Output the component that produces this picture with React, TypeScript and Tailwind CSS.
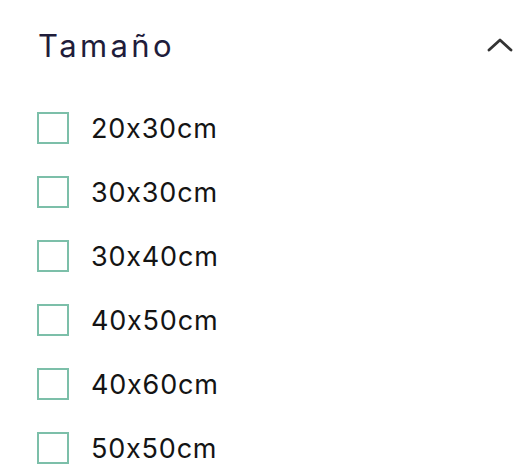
const sizes = ["20x30cm", "30x30cm", "30x40cm", "40x50cm", "40x60cm", "50x50cm"]

export default function App() {
  return (
    <div className="w-[532px] h-[474px] bg-white overflow-hidden" style={{ fontFamily: "Inter, 'Noto Sans', sans-serif" }}>
      <div className="flex items-center justify-between pl-[38px] pr-[18px] pt-[24px] h-[66px]">
        <h2 className="text-[31px] leading-none font-normal text-[#1f1d3b] tracking-[3.4px]">Tamaño</h2>
        <svg width="26" height="16" viewBox="0 0 26 16" fill="none" className="mr-[1px]">
          <path d="M2 13 L13 3 L24 13" stroke="#333333" strokeWidth="2.8" strokeLinecap="round" strokeLinejoin="round" />
        </svg>
      </div>
      <ul className="flex flex-col gap-[32px] pl-[37px] pt-[46px]">
        {sizes.map((s) => (
          <li key={s} className="flex items-center h-[32px]">
            <span className="w-[32px] h-[32px] border-2 border-[#7cbfa9] shrink-0" />
            <span className="ml-[22px] text-[27px] leading-none text-[#141414] tracking-[0.8px]">{s}</span>
          </li>
        ))}
      </ul>
    </div>
  )
}
